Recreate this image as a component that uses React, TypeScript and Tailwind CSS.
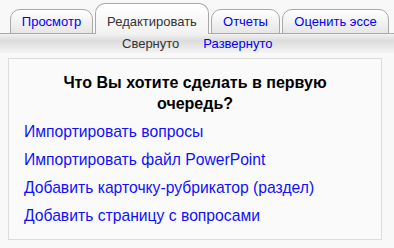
import React from 'react';

const tabs = [
  { label: 'Просмотр', w: 'w-[83px]', active: false },
  { label: 'Редактировать', w: 'w-[114px]', active: true },
  { label: 'Отчеты', w: 'w-[69px]', active: false },
  { label: 'Оценить эссе', w: 'w-[107px]', active: false },
];

const links = [
  'Импортировать вопросы',
  'Импортировать файл PowerPoint',
  'Добавить карточку-рубрикатор (раздел)',
  'Добавить страницу с вопросами',
];

export default function App() {
  return (
    <div className="w-[394px] h-[248px] bg-[#f8f8f8] font-['Liberation_Sans',Arial,sans-serif] overflow-hidden">
      {/* Tab row */}
      <div className="relative h-[34px] flex items-end gap-[2px] pl-[10px]">
        <div className="absolute left-0 right-0 bottom-0 h-px bg-[#aaaaaa]" />
        {tabs.map((t) => (
          <div
            key={t.label}
            className={`relative ${t.w} flex items-center justify-center rounded-t-[10px] border border-[#a8a8a8] text-[13px] ${
              t.active
                ? 'h-[31px] pt-[5px] border-b-0 bg-gradient-to-b from-white to-[#f2f2f2] text-[#333333] z-10'
                : 'h-[25px] pt-[1px] bg-gradient-to-b from-white to-[#e6e6e6] text-[#0000ff]'
            }`}
          >
            {t.label}
          </div>
        ))}
      </div>

      {/* Sub tabs */}
      <div className="h-[19px] bg-[linear-gradient(#f2f2f2,#dcdcdc_35%,#f4f4f4)] flex items-center text-[13px]">
        <span className="ml-[122px] text-[#333333]">Свернуто</span>
        <span className="ml-[24px] text-[#0000ff]">Развернуто</span>
      </div>

      {/* Content box */}
      <div className="mx-[8px] mt-[5px] w-[374px] h-[182px] border border-[#dcdcdc] bg-[#fafafa] pt-[13px] px-[15px]">
        <h2 className="text-center font-bold text-[16px] leading-[21px] text-black px-[24px]">
          Что Вы хотите сделать в первую очередь?
        </h2>
        <div className="mt-[9px] flex flex-col gap-[10px]">
          {links.map((l) => (
            <a key={l} href="#" className="text-[15.7px] leading-[18px] text-[#1010ff]">
              {l}
            </a>
          ))}
        </div>
      </div>
    </div>
  );
}
